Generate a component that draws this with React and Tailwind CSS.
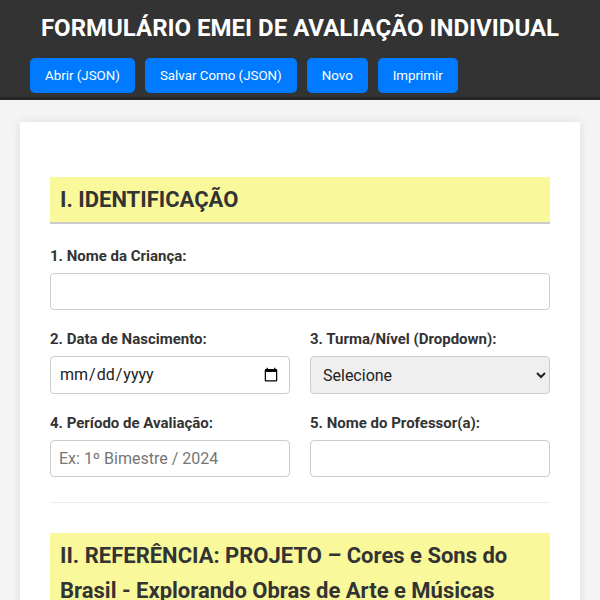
import { useState } from "react";

const labelClass = "mb-[8px] block text-[15px] font-bold leading-[normal] text-[#333]";
const fieldClass = "block h-[37px] w-full rounded-[4px] border border-[#ccc] px-[8px] text-[16px] text-[#222] placeholder:text-[#757575] focus:outline-none";
const inputClass = `${fieldClass} bg-white`;

export default function App() {
  const [form, setForm] = useState({ nome: "", nascimento: "", turma: "", periodo: "", professor: "" });
  const set = (k) => (e) => setForm((s) => ({ ...s, [k]: e.target.value }));

  return (
    <div className="min-h-screen bg-[#f4f4f4] pb-10 font-['Roboto','Liberation_Sans',sans-serif]">
      {/* Header */}
      <header className="border-b-[3px] border-[#262626] bg-[#333] px-[30px] pb-[4px] pt-[10px]">
        <h1 className="text-center text-[24px] font-bold leading-[36px] text-white">
          FORMULÁRIO EMEI DE AVALIAÇÃO INDIVIDUAL
        </h1>
        <div className="mt-[12px] flex gap-[10px]">
          {["Abrir (JSON)", "Salvar Como (JSON)", "Novo", "Imprimir"].map((b) => (
            <button
              key={b}
              className="rounded-[5px] bg-[#007bff] px-[15px] py-[10px] text-[13.333px] leading-[normal] text-white"
            >
              {b}
            </button>
          ))}
        </div>
      </header>

      {/* Form card */}
      <main className="mx-[20px] mt-[22px] bg-white px-[30px] pb-[30px] pt-[55px] shadow-[0_0_10px_rgba(0,0,0,0.1)]">
        <h2 className="mb-[23px] border-b-2 border-[#ccc] bg-[#f9f99b] px-[10px] py-[5px] text-[22px] font-bold leading-[35px] text-[#333]">
          I. IDENTIFICAÇÃO
        </h2>

        <div className="mb-[20px]">
          <label className={labelClass}>1. Nome da Criança:</label>
          <input value={form.nome} onChange={set("nome")} className={inputClass} />
        </div>

        <div className="mb-[20px] grid grid-cols-2 gap-[20px]">
          <div>
            <label className={labelClass}>2. Data de Nascimento:</label>
            <input type="date" value={form.nascimento} onChange={set("nascimento")} className={`${inputClass} h-[38px]`} />
          </div>
          <div>
            <label className={labelClass}>3. Turma/Nível (Dropdown):</label>
            <select value={form.turma} onChange={set("turma")} className={`${fieldClass} h-[38px] bg-[#efefef]`}>
              <option value="">Selecione</option>
              <option>Infantil I</option>
              <option>Infantil II</option>
            </select>
          </div>
        </div>

        <div className="mb-[20px] grid grid-cols-2 gap-[20px]">
          <div>
            <label className={labelClass}>4. Período de Avaliação:</label>
            <input value={form.periodo} onChange={set("periodo")} className={inputClass} placeholder="Ex: 1º Bimestre / 2024" />
          </div>
          <div>
            <label className={labelClass}>5. Nome do Professor(a):</label>
            <input value={form.professor} onChange={set("professor")} className={inputClass} />
          </div>
        </div>

        <hr className="mb-[30px] mt-[25px] border-0 border-t border-[#eee]" />

        <h2 className="mb-[23px] border-b-2 border-[#ccc] bg-[#f9f99b] px-[10px] py-[5px] text-[22px] font-bold leading-[35px] text-[#333]">
          II. REFERÊNCIA: PROJETO – Cores e Sons do Brasil - Explorando Obras de Arte e Músicas Brasileiras
        </h2>
      </main>
    </div>
  );
}
